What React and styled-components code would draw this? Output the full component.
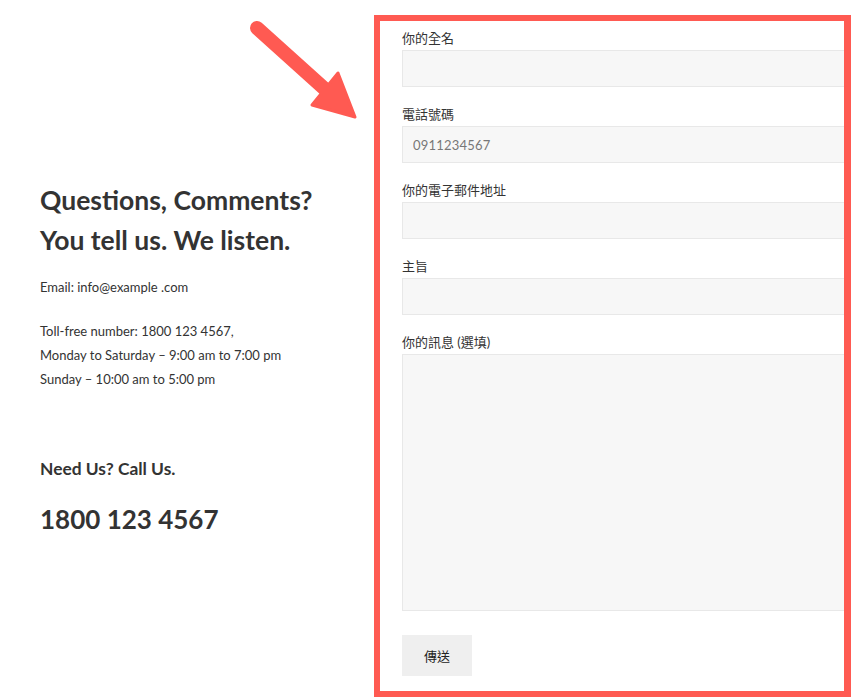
import React from "react";
import styled, { createGlobalStyle } from "styled-components";

const Global = createGlobalStyle`
  html, body { margin: 0; padding: 0; background: #fff; }
  body { font-family: Lato, "Noto Sans CJK TC", sans-serif; color: #333; }
  * { box-sizing: border-box; }
`;

const Page = styled.div`
  position: relative;
  width: 851px;
  height: 697px;
  overflow: hidden;
  display: flex;
  background: #fff;
`;

const InfoColumn = styled.section`
  width: 374px;
  flex: none;
  padding: 180px 0 0 40px;
  display: flex;
  flex-direction: column;
`;

const Heading = styled.h2`
  margin: 0;
  font-family: Lato, sans-serif;
  font-weight: 700;
  font-size: 26.5px;
  line-height: 40px;
  color: #333;
`;

const Para = styled.p`
  margin: ${(p) => p.$top || 0}px 0 0;
  font-family: Lato, sans-serif;
  font-size: 13px;
  line-height: 24px;
  color: #333;
`;

const SubHeading = styled.h4`
  margin: 66px 0 0;
  font-family: Lato, sans-serif;
  font-weight: 700;
  font-size: 17.4px;
  line-height: 24px;
  color: #333;
`;

const Phone = styled.div`
  margin-top: 20px;
  font-family: Lato, sans-serif;
  font-weight: 700;
  font-size: 26px;
  line-height: 36px;
  color: #333;
`;

const FormColumn = styled.form`
  flex: 1;
  padding: 29px 0 0 28px;
  display: flex;
  flex-direction: column;
  min-width: 0;
`;

const Field = styled.div`
  display: flex;
  flex-direction: column;
  margin-bottom: 18px;
  width: 470px;
`;

const Label = styled.label`
  font-family: Lato, "Noto Sans CJK TC", sans-serif;
  font-size: 13px;
  line-height: 18px;
  color: #333;
  margin-bottom: 3px;
`;

const Input = styled.input`
  height: 37px;
  width: 100%;
  background: #f7f7f7;
  border: 1px solid #e8e8e8;
  border-radius: 0;
  padding: 0 10px;
  font-family: Lato, sans-serif;
  font-size: 13px;
  color: #666;
  outline: none;
  letter-spacing: 0.2px;
  &::placeholder { color: #777; }
`;

const TextArea = styled.textarea`
  height: 257px;
  width: 100%;
  background: #f7f7f7;
  border: 1px solid #e8e8e8;
  border-radius: 0;
  resize: none;
  outline: none;
`;

const Submit = styled.button`
  margin-top: 6px;
  align-self: flex-start;
  width: 70px;
  height: 41px;
  background: #efefef;
  border: none;
  font-family: "Noto Sans CJK TC", sans-serif;
  font-size: 13px;
  color: #222;
  padding: 0;
`;

const Highlight = styled.div`
  position: absolute;
  left: 374px;
  top: 15px;
  right: 0;
  bottom: 0;
  border: 6px solid #ff5a52;
  border-right-width: 7px;
  pointer-events: none;
`;

const Arrow = styled.svg`
  position: absolute;
  left: 230px;
  top: 10px;
`;

export default function App() {
  return (
    <>
      <Global />
      <Page>
        <InfoColumn>
          <Heading>
            Questions, Comments?
            <br />
            You tell us. We listen.
          </Heading>
          <Para $top={15}>Email: info@example .com</Para>
          <Para $top={20}>
            Toll-free number: 1800 123 4567,
            <br />
            Monday to Saturday – 9:00 am to 7:00 pm
            <br />
            Sunday – 10:00 am to 5:00 pm
          </Para>
          <SubHeading>Need Us? Call Us.</SubHeading>
          <Phone>1800 123 4567</Phone>
        </InfoColumn>
        <FormColumn onSubmit={(e) => e.preventDefault()}>
          <Field>
            <Label>你的全名</Label>
            <Input type="text" />
          </Field>
          <Field>
            <Label>電話號碼</Label>
            <Input type="tel" placeholder="0911234567" />
          </Field>
          <Field>
            <Label>你的電子郵件地址</Label>
            <Input type="email" />
          </Field>
          <Field>
            <Label>主旨</Label>
            <Input type="text" />
          </Field>
          <Field>
            <Label>你的訊息 (選填)</Label>
            <TextArea />
          </Field>
          <Submit type="submit">傳送</Submit>
        </FormColumn>
        <Arrow width="140" height="120" viewBox="0 0 140 120">
          <line x1="27" y1="18" x2="97" y2="81" stroke="#ff5a52" strokeWidth="14" strokeLinecap="round" />
          <polygon
            points="108,63 125,107 82,95"
            fill="#ff5a52"
            stroke="#ff5a52"
            strokeWidth="3"
            strokeLinejoin="round"
          />
        </Arrow>
        <Highlight />
      </Page>
    </>
  );
}
